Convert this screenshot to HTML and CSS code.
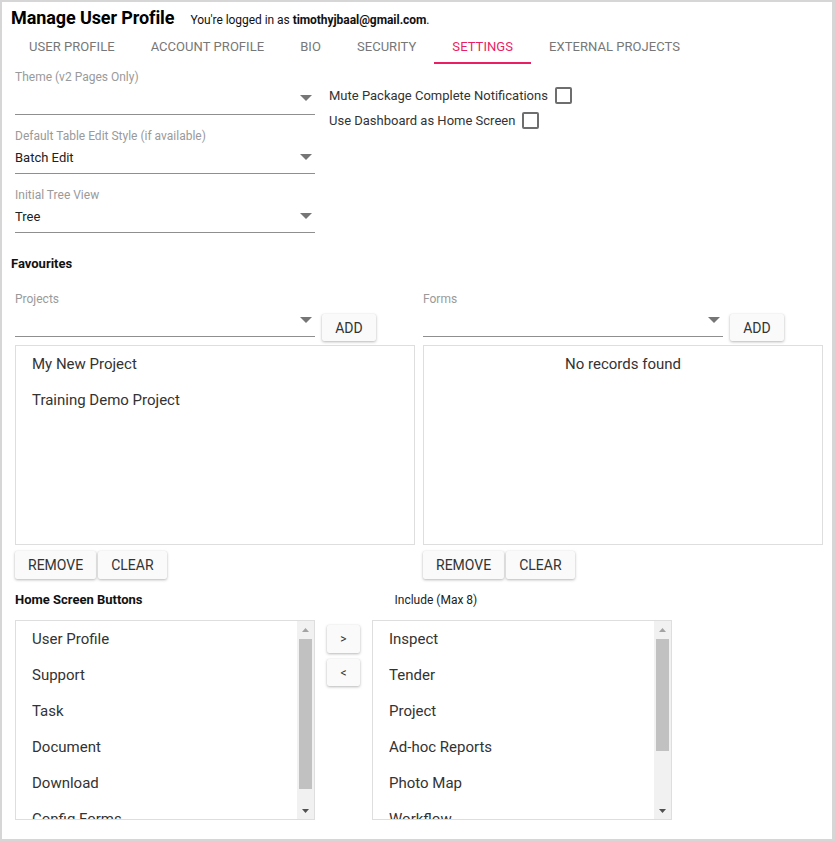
FILE: index.html
```html
<!DOCTYPE html>
<html>
<head>
<meta charset="utf-8">
<link rel="stylesheet" href="styles.css">
</head>
<body>
<div class="frame">
  <div class="header">
    <h1 class="title">Manage User Profile</h1>
    <span class="login">You're logged in as <b>timothyjbaal@gmail.com</b>.</span>
  </div>
  <div class="tabs">
    <div class="tab">User Profile</div>
    <div class="tab">Account Profile</div>
    <div class="tab">Bio</div>
    <div class="tab">Security</div>
    <div class="tab active">Settings</div>
    <div class="tab">External Projects</div>
  </div>

  <div class="settings">
    <div class="fields">
      <div class="field">
        <div class="label">Theme (v2 Pages Only)</div>
        <div class="value"><span></span><svg class="arrow" width="12" height="6" viewBox="0 0 12 6"><path d="M0 0h12L6 6z" fill="#767676"/></svg></div>
      </div>
      <div class="field">
        <div class="label">Default Table Edit Style (if available)</div>
        <div class="value"><span>Batch Edit</span><svg class="arrow" width="12" height="6" viewBox="0 0 12 6"><path d="M0 0h12L6 6z" fill="#767676"/></svg></div>
      </div>
      <div class="field">
        <div class="label">Initial Tree View</div>
        <div class="value"><span>Tree</span><svg class="arrow" width="12" height="6" viewBox="0 0 12 6"><path d="M0 0h12L6 6z" fill="#767676"/></svg></div>
      </div>
    </div>
    <div class="checks">
      <label class="check">Mute Package Complete Notifications <span class="box"></span></label>
      <label class="check">Use Dashboard as Home Screen <span class="box"></span></label>
    </div>
  </div>

  <h2 class="section fav">Favourites</h2>
  <div class="favs">
    <div class="favcol">
      <div class="pickrow">
        <div class="field grow">
          <div class="label">Projects</div>
          <div class="value"><span></span><svg class="arrow" width="12" height="6" viewBox="0 0 12 6"><path d="M0 0h12L6 6z" fill="#767676"/></svg></div>
        </div>
        <button class="btn add">ADD</button>
      </div>
      <div class="listbox">
        <div class="item">My New Project</div>
        <div class="item">Training Demo Project</div>
      </div>
      <div class="btnrow">
        <button class="btn">REMOVE</button>
        <button class="btn">CLEAR</button>
      </div>
    </div>
    <div class="favcol">
      <div class="pickrow">
        <div class="field grow">
          <div class="label">Forms</div>
          <div class="value"><span></span><svg class="arrow" width="12" height="6" viewBox="0 0 12 6"><path d="M0 0h12L6 6z" fill="#767676"/></svg></div>
        </div>
        <button class="btn add">ADD</button>
      </div>
      <div class="listbox">
        <div class="item empty">No records found</div>
      </div>
      <div class="btnrow">
        <button class="btn">REMOVE</button>
        <button class="btn">CLEAR</button>
      </div>
    </div>
  </div>

  <div class="homehead">
    <h2 class="section home">Home Screen Buttons</h2>
    <span class="include">Include (Max 8)</span>
  </div>
  <div class="homerow">
    <div class="slist">
      <div class="sitems">
        <div class="item">User Profile</div>
        <div class="item">Support</div>
        <div class="item">Task</div>
        <div class="item">Document</div>
        <div class="item">Download</div>
        <div class="item">Config Forms</div>
      </div>
      <div class="sbar">
        <div class="sarrow"><svg width="7" height="4" viewBox="0 0 7 4"><path d="M0 4L3.5 0L7 4z" fill="#a3a3a3"/></svg></div>
        <div class="strack"><div class="sthumb t1"></div></div>
        <div class="sarrow"><svg width="7" height="4" viewBox="0 0 7 4"><path d="M0 0h7L3.5 4z" fill="#505050"/></svg></div>
      </div>
    </div>
    <div class="movebtns">
      <button class="btn mv">&gt;</button>
      <button class="btn mv">&lt;</button>
    </div>
    <div class="slist">
      <div class="sitems">
        <div class="item">Inspect</div>
        <div class="item">Tender</div>
        <div class="item">Project</div>
        <div class="item">Ad-hoc Reports</div>
        <div class="item">Photo Map</div>
        <div class="item">Workflow</div>
      </div>
      <div class="sbar">
        <div class="sarrow"><svg width="7" height="4" viewBox="0 0 7 4"><path d="M0 4L3.5 0L7 4z" fill="#a3a3a3"/></svg></div>
        <div class="strack"><div class="sthumb t2"></div></div>
        <div class="sarrow"><svg width="7" height="4" viewBox="0 0 7 4"><path d="M0 0h7L3.5 4z" fill="#505050"/></svg></div>
      </div>
    </div>
  </div>
</div>
</body>
</html>
```

FILE: styles.css
```css
* { box-sizing: border-box; }
html, body { margin: 0; padding: 0; background: #fff; }
body { font-family: Roboto, "Liberation Sans", sans-serif; color: #212121; }

.frame {
  width: 835px;
  height: 841px;
  border: 2px solid #d6d6d6;
  border-right-width: 3px;
  padding: 5px 0 0 9px;
  overflow: hidden;
}

.header { display: flex; align-items: baseline; height: 22px; }
.title { margin: 0; font-size: 18px; font-weight: 700; line-height: 22px; color: #000; letter-spacing: -0.1px; }
.login { margin-left: 16px; font-size: 12px; color: #111; letter-spacing: -0.05px; }
.login b { font-weight: 700; }

.tabs { display: flex; height: 34px; margin-top: 1px; }
.tab {
  padding: 1px 18px 0;
  font-size: 13px;
  text-transform: uppercase;
  color: #777;
  line-height: 31px;
  letter-spacing: 0.05px;
  border-bottom: 2px solid transparent;
}
.tab.active { color: #e91e63; border-bottom-color: #e91e63; }

.settings { display: flex; margin-left: 4px; padding-top: 5px; }
.fields { width: 300px; display: flex; flex-direction: column; gap: 13px; }
.field { display: flex; flex-direction: column; }
.field.grow { flex: 1; }
.label { font-size: 12px; line-height: 16px; color: #9a9a9a; }
.value {
  display: flex; align-items: center; justify-content: space-between;
  height: 30px; padding-bottom: 3px;
  font-size: 13px; color: #212121;
  border-bottom: 1px solid #8f8f8f;
}
.arrow { margin-right: 3px; }

.checks { margin-left: 14px; padding-top: 17px; display: flex; flex-direction: column; gap: 7px; }
.check { display: flex; align-items: center; gap: 7px; font-size: 13px; color: #333; height: 18px; }
.box { width: 17px; height: 17px; border: 2px solid #6e6e6e; border-radius: 2px; display: inline-block; }

.section { margin: 0; font-size: 13px; font-weight: 700; color: #111; line-height: 16px; }
.fav { margin-top: 23px; }

.favs { display: flex; gap: 8px; margin-left: 4px; margin-top: 19px; }
.favcol { width: 400px; display: flex; flex-direction: column; }
.pickrow { display: flex; align-items: flex-end; width: 369px; gap: 7px; }
.pickrow .field { width: 300px; flex: none; }

.btn {
  font-family: Roboto, "Liberation Sans", sans-serif;
  font-size: 14px;
  color: #333;
  background: #fafafa;
  border: none;
  border-radius: 2px;
  box-shadow: 0 1px 3px rgba(0,0,0,0.28), 0 0 1px rgba(0,0,0,0.08);
  padding: 0 13px;
  height: 28px;
  cursor: pointer;
}
.add { height: 27px; margin-bottom: -4px; width: 54px; padding: 0; }

.listbox {
  margin-top: 8px;
  height: 200px;
  border: 1px solid #dedede;
}
.item { font-size: 15px; line-height: 36px; padding-left: 16px; color: #333; white-space: nowrap; }
.item.empty { text-align: center; padding-left: 0; }

.btnrow { display: flex; gap: 2px; margin-top: 6px; }

.homehead { display: flex; align-items: center; margin-left: 4px; margin-top: 13px; height: 16px; }
.include { margin-left: 252px; font-size: 12px; color: #222; }

.homerow { display: flex; margin-left: 4px; margin-top: 12px; align-items: flex-start; }
.slist { width: 300px; height: 200px; border: 1px solid #dedede; display: flex; overflow: hidden; }
.sitems { flex: 1; overflow: hidden; }
.sbar { width: 17px; display: flex; flex-direction: column; background: #f1f1f1; }
.sarrow { height: 17px; display: flex; align-items: center; justify-content: center; }
.strack { flex: 1; padding: 0 2px; }
.sthumb { background: #c1c1c1; }
.t1 { height: 150px; margin-top: 1px; }
.t2 { height: 112px; margin-top: 1px; }

.movebtns { display: flex; flex-direction: column; gap: 6px; margin: 5px 12px 0 12px; }
.mv { width: 33px; height: 28px; padding: 0; font-size: 12px; }
.mv + .mv { height: 27px; }
```
